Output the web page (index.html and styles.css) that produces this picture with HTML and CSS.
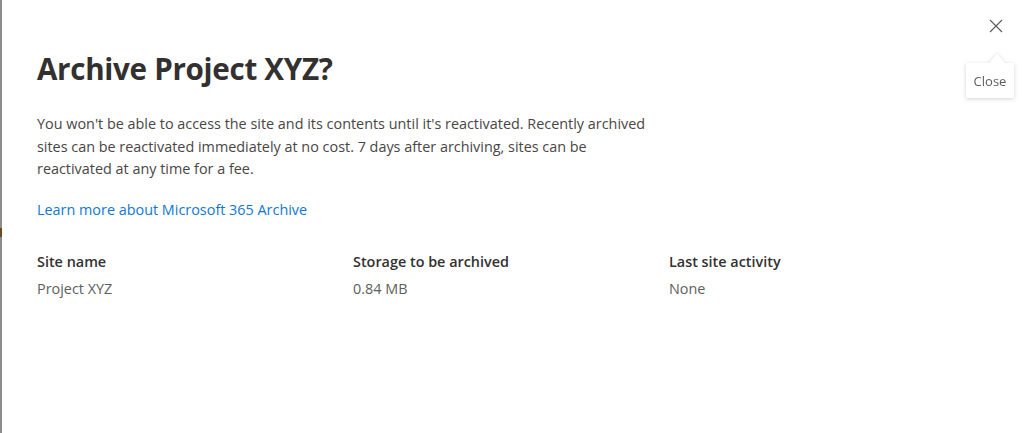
FILE: index.html
```html
<!DOCTYPE html>
<html>
<head>
<meta charset="utf-8">
<link rel="stylesheet" href="styles.css">
</head>
<body>
<div class="page">
  <div class="edge"><span class="edge-mark"></span></div>
  <div class="dialog">
    <button class="close" aria-label="Close">
      <svg width="14" height="14" viewBox="0 0 14 14"><path d="M1 1 L13 13 M13 1 L1 13" stroke="#5a5a5a" stroke-width="1.1" fill="none"/></svg>
    </button>
    <div class="tooltip">Close</div>
    <h1 class="title">Archive Project XYZ?</h1>
    <p class="desc">You won't be able to access the site and its contents until it's reactivated. Recently archived sites can be reactivated immediately at no cost. 7 days after archiving, sites can be reactivated at any time for a fee.</p>
    <a class="link" href="#">Learn more about Microsoft 365 Archive</a>
    <div class="table">
      <div class="col"><div class="th">Site name</div><div class="td">Project XYZ</div></div>
      <div class="col"><div class="th">Storage to be archived</div><div class="td">0.84 MB</div></div>
      <div class="col"><div class="th">Last site activity</div><div class="td">None</div></div>
    </div>
  </div>
</div>
</body>
</html>
```

FILE: styles.css
```css
* { box-sizing: border-box; }
html, body { margin: 0; padding: 0; background: #fff; }
body { font-family: "Open Sans", "Noto Sans", sans-serif; width: 1022px; height: 433px; overflow: hidden; }
.page { display: flex; height: 433px; }
.edge { width: 2px; background: #8c8c8c; position: relative; flex: none; }
.edge-mark { position: absolute; left: 0; top: 228px; width: 2px; height: 9px; background: #6b4a1e; }
.dialog { flex: 1; position: relative; padding: 48px 0 0 35px; }
.close { position: absolute; top: 18px; right: 18px; width: 16px; height: 16px; border: 0; padding: 0; background: none; display: flex; align-items: center; justify-content: center; }
.tooltip { position: absolute; top: 63px; right: 8px; width: 48px; height: 35px; background: #fff; color: #605e5c; font-size: 13px; display: flex; align-items: center; justify-content: center; filter: drop-shadow(0 1px 2px rgba(0,0,0,0.16)) drop-shadow(0 0 0.6px rgba(0,0,0,0.12)); }
.tooltip::before { content: ""; position: absolute; top: -10px; left: 23px; width: 16px; height: 10px; background: #fff; clip-path: polygon(50% 0, 100% 100%, 0 100%); }
.title { margin: 0; font-size: 29.6px; font-weight: 700; color: #323130; line-height: 42px; letter-spacing: -0.3px; }
.desc { margin: 23px 0 0; width: 620px; font-size: 14.4px; line-height: 22.5px; color: #484644; }
.link { display: block; margin-top: 18px; font-size: 14.4px; line-height: 22px; color: #0f78d2; text-decoration: none; }
.table { display: flex; margin-top: 30px; }
.col { width: 316px; }
.th { font-size: 14.4px; font-weight: 600; color: #323130; line-height: 22px; }
.td { margin-top: 5px; font-size: 14.4px; color: #605e5c; line-height: 22px; }
```
